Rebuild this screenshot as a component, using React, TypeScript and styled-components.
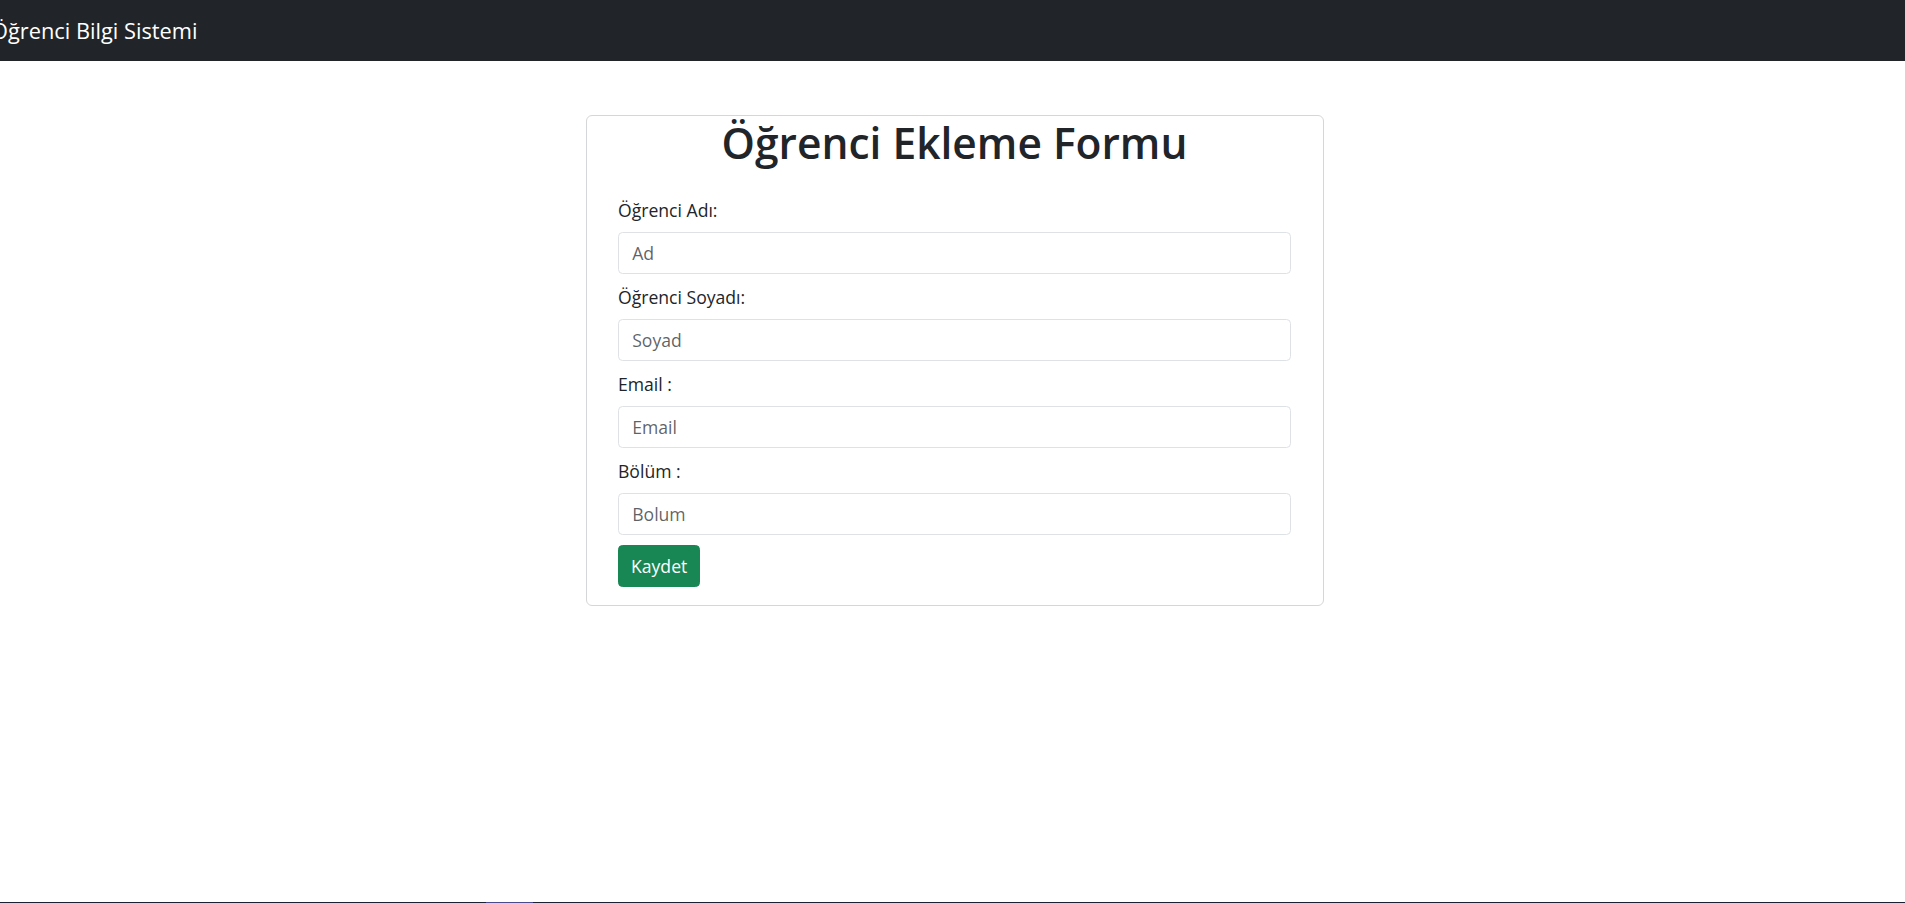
import styled, { createGlobalStyle } from "styled-components";

const GlobalStyle = createGlobalStyle`
  html, body {
    margin: 0;
    padding: 0;
    background: #ffffff;
  }
  body {
    font-family: "Open Sans", "Noto Sans", "Liberation Sans", sans-serif;
    color: #212529;
  }
  * {
    box-sizing: border-box;
  }
`;

const fields = [
  { label: "Öğrenci Adı:", placeholder: "Ad" },
  { label: "Öğrenci Soyadı:", placeholder: "Soyad" },
  { label: "Email :", placeholder: "Email" },
  { label: "Bölüm :", placeholder: "Bolum" },
];

const App = () => {
  return (
    <Page>
      <GlobalStyle />
      <NavBar>
        <Brand>Öğrenci Bilgi Sistemi</Brand>
      </NavBar>
      <Main>
        <Card>
          <Title>Öğrenci Ekleme Formu</Title>
          <Form onSubmit={(e) => e.preventDefault()}>
            {fields.map((f) => (
              <Group key={f.placeholder}>
                <Label>{f.label}</Label>
                <Input type="text" placeholder={f.placeholder} />
              </Group>
            ))}
            <SaveButton type="submit">Kaydet</SaveButton>
          </Form>
        </Card>
      </Main>
      <BottomEdge>
        <EdgeMark />
      </BottomEdge>
    </Page>
  );
};

const Page = styled.div`
  min-height: 100vh;
  display: flex;
  flex-direction: column;
`;

const NavBar = styled.nav`
  height: 61px;
  background-color: #212529;
  display: flex;
  align-items: center;
  overflow: hidden;
`;

const Brand = styled.a`
  margin-left: -9px;
  font-size: 21.8px;
  color: #ffffff;
  white-space: nowrap;
  cursor: pointer;
`;

const Main = styled.main`
  flex: 1;
  display: flex;
  justify-content: center;
  padding: 54px 0 0 5px;
`;

const Card = styled.div`
  width: 738px;
  align-self: flex-start;
  border: 1px solid #d5d6d7;
  border-radius: 6px;
  padding: 1px 32px 18px 31px;
`;

const Title = styled.h1`
  margin: 0 0 27px;
  font-size: 42.5px;
  line-height: 52.8px;
  font-weight: 600;
  text-align: center;
  color: #212529;
`;

const Form = styled.form`
  display: flex;
  flex-direction: column;
`;

const Group = styled.div`
  display: flex;
  flex-direction: column;
  margin-bottom: 10px;
`;

const Label = styled.label`
  font-size: 17.6px;
  line-height: 26.4px;
  margin-bottom: 8.8px;
  color: #212529;
`;

const Input = styled.input`
  height: 41.8px;
  width: 100%;
  padding: 0 13.2px;
  font-family: inherit;
  font-size: 17.6px;
  color: #212529;
  border: 1px solid #dee2e6;
  border-radius: 4.5px;
  outline: none;

  &::placeholder {
    color: rgba(33, 37, 41, 0.72);
  }
`;

const SaveButton = styled.button`
  align-self: flex-start;
  height: 41.8px;
  padding: 0 12px;
  font-family: inherit;
  font-size: 17.6px;
  color: #ffffff;
  background-color: #198754;
  border: 1px solid #198754;
  border-radius: 4.5px;
  cursor: pointer;
`;

const BottomEdge = styled.div`
  height: 1px;
  background-color: #1b2133;
  position: relative;
`;

const EdgeMark = styled.span`
  position: absolute;
  left: 486px;
  top: 0;
  width: 47px;
  height: 1px;
  background-color: #4b4a8c;
`;

export default App;
